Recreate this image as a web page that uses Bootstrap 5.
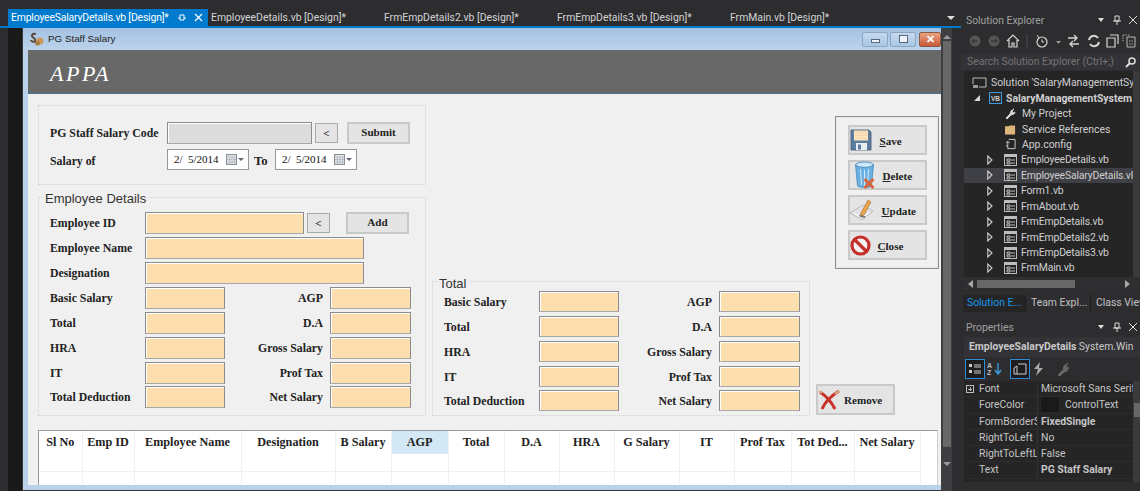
<!DOCTYPE html>
<html lang="en">
<head>
<meta charset="UTF-8">
<title>PG Staff Salary</title>
<link href="https://cdn.jsdelivr.net/npm/bootstrap@5.3.0/dist/css/bootstrap.min.css" rel="stylesheet">
<style>
html, body { height: 491px; overflow: hidden; }
body { background: #2d2d30; font-family: Roboto, sans-serif; color: #d0d0d0; }
.shell { width: 1140px; height: 491px; }
.editor { width: 961px; }
.tabbar { height: 28px; padding: 9px 0 0 8px; border-bottom: 2px solid #007acc; }
.vs-tab { width: 173px; height: 17px; padding-left: 3px; font-size: 10.4px; line-height: 17px; color: #d4d4d4; white-space: nowrap; }
.vs-tab.active { width: 200px; background: #007acc; color: #fff; letter-spacing: -.17px; }
.tab-x { margin: 0 5px 0 8px; }
.tab-more { margin-left: auto; margin-right: 6px; width: 0; height: 0; margin-top: 7px; border: 4px solid transparent; border-top-color: #ddd; }
.gutter { width: 23px; background: linear-gradient(90deg, #2d2d30 0 8px, #191919 8px 22px, #3a3a3c 22px); }
.window { width: 918px; background: #b9d1ea; border-bottom: 1px solid #333; padding: 0 0 5px 5px; }
.titlebar { height: 22px; margin-left: -5px; padding-left: 7px; background: linear-gradient(#a3c1e2, #bcd3ec); color: #222; font-family: "Liberation Sans", sans-serif; font-size: 9.8px; }
.cap { height: 15px; margin-left: 2px; border: 1px solid #8ba6c4; border-radius: 2px; background: linear-gradient(#c6daef, #a9c5e4); width: 26px; }
.cap.shut { width: 22px; background: linear-gradient(#e9a27f, #c9583a); border-color: #8d5a45; color: #fff; font-size: 11px; line-height: 12px; font-weight: 700; margin-left: 3px; }
.cap i { display: block; background: #eef3f9; border: 1px solid #56677c; }
.cap i.min { width: 9px; height: 4px; margin-top: 6px; }
.cap i.max { width: 9px; height: 8px; }
.brand { height: 44px; padding: 0 0 0 22px; background: #686868; border-bottom: 2px dotted #48718f; color: #fff; font-family: "Liberation Serif", serif; font-style: italic; font-size: 22px; letter-spacing: 2.5px; line-height: 47px; }
.form-body { height: 391px; padding: 11px 0 0 10px; background: #f0f0f0; overflow: hidden; color: #222; font-family: "Liberation Serif", serif; font-size: 11.8px; font-weight: 700; }
.left-col { width: 388px; }
.group { position: relative; border: 1px dotted #d2d2d2; }
.code-group { height: 80px; padding: 16px 15px 0 11px; }
.emp-group { height: 219px; margin-top: 12px; padding: 12.5px 0 0 11px; }
.total-group { width: 378px; height: 135px; padding: 7px 0 0 11px; }
.legend-text { position: absolute; top: -6px; left: 6px; padding-right: 2px; background: #f0f0f0; color: #333; font-family: "Liberation Sans", sans-serif; font-weight: 400; font-size: 13px; line-height: 13px; }
.total-group .legend-text { top: -5px; }
.code-label { width: 117px; }
.line .code-label { padding-top: 2px; }
.line { height: 22px; margin-bottom: 4px; }
.fields { display: grid; grid-template-columns: 95px 80px 105px 81px; grid-auto-rows: 25px; align-items: center; }
.total-group .fields { grid-template-columns: 95px 80px 100px 81px; }
.fields > span { padding-top: 2px; }
.fields .end { text-align: right; padding-right: 7px; }
.fields > :nth-last-child(-n+4) { margin-top: -2px; }
.span-all { grid-column: 2 / -1; }
.form-control.peach, .form-control.grey { height: 21.5px; min-height: 0; padding: 0; border: 1px solid #8c8c8c; border-bottom-color: #a8a8a8; border-radius: 0; background: #fddeae; box-shadow: inset 1px 1px 0 #fff; }
.form-control.grey { background: #dcdcdc; width: 145px; }
.w-id { width: 159px !important; }
.w-name { width: 219px !important; }
.btn.win { padding: 0; border: 2px solid #c9c9c9; border-radius: 0; background: #e4e4e4; color: #222; font: inherit; font-size: 11.1px; }
.btn.lt { width: 23px; height: 20px; margin-left: 3px; line-height: 14px; border-width: 1px; border-color: #aaa; }
.btn.push { width: 63px; height: 22px; line-height: 14px; padding-bottom: 3px; margin-left: 9px; }
.btn.add-btn { margin-left: 16px; }
.date { width: 82px; height: 21px; padding-left: 6px; background: #fff; border: 1px solid #999; font-weight: 400; font-size: 11px; color: #111; white-space: pre; }
.date b { width: 0; height: 0; margin: 3px 4px 0 1px; border: 3.5px solid transparent; border-top-color: #667; }
.to-label { width: 26px; padding-left: 5px; font-size: 12.8px; }
.right-col { width: 507px; margin-left: 6px; }
.actions { width: 104px; height: 153px; margin-top: 11px; padding-top: 8px; border: 1px solid #8f8f8f; box-shadow: inset 0 0 0 1px #e6e6e6; }
.btn.act { width: 79px; height: 30px; }
.btn.act + .btn.act { margin-top: 5px; }
.btn.act u { text-decoration-thickness: 1px; }
.btn.act span, .btn.rm span { padding-top: 2px; }
.close-txt { margin-left: 3px; }
.btn.rm { width: 79px; height: 31px; margin: 0 0 1px 6px; }
.sheet { width: 900px; margin-top: 14px; background: #fff; border: 1px solid #9a9a9a; border-right-color: #ccc; }
.sheet .table { width: 881px; margin: 0; table-layout: fixed; font-size: 12.2px; --bs-table-bg: transparent; }
.sheet th, .sheet td { padding: 0; height: 17.5px; text-align: center; border: 0; border-right: 1px solid #f0f0f0; border-bottom: 1px solid #f0f0f0; color: #222; white-space: nowrap; }
.sheet th { height: 21px; border-bottom: 0; line-height: 23px; }
.sheet th.on { background: #d3e7f4; }
.vscroll { width: 19px; padding-right: 8px; background: linear-gradient(90deg, #3e3e42 0 11px, #2d2d30 11px); }
.vscroll .thumb { width: 8px; height: 406px; margin: 2px 0 0 2px; background: #686868; }
.arr-up, .arr-dn { width: 0; height: 0; margin-left: 2px; border: 4px solid transparent; }
.arr-up { margin-top: 3px; border-bottom-color: #999; }
.arr-dn { margin-top: 15px; border-top-color: #999; }
.side { width: 179px; padding-top: 12px; font-size: 10.4px; overflow: hidden; }
.pane-title { height: 16px; padding: 0 3px 0 5px; color: #a0a0a0; line-height: 15px; white-space: nowrap; }
.pane-title svg { flex: none; }
.tools { height: 25px; padding-left: 5px; }
.search { height: 16px; margin-top: 1px; padding-left: 6px; background: #333337; color: #747474; line-height: 15px; white-space: nowrap; }
.tree { height: 206px; margin: 1px 0 0 3px; padding: 4px 0 0; background: #252526; color: #cfcfcf; overflow: hidden; position: relative; }
.tree li { height: 15.45px; line-height: 15px; white-space: nowrap; overflow: hidden; width: 169px; }
.tree li.sel { background: #3f3f46; }
.tree svg { flex: none; }
.lv0 { padding-left: 8px; }
.lv1 { padding-left: 10px; }
.lv2 { padding-left: 41px; }
.lv2 svg { margin-right: 6px; }
.lv3 { padding-left: 23px; letter-spacing: -.15px; }
.tw { margin-right: 9px; }
.lv3 .tw { margin-right: 11px; }
.tree-bar { position: absolute; right: 0; top: 0; bottom: 0; width: 7px; background: #3a3a3d; }
.hbar { height: 13px; margin-left: 3px; padding: 0 10px 0 4px; background: #2f2f32; }
.hbar span { width: 98px; height: 8px; margin-left: 4px; background: #686868; }
.side-tabs { height: 17px; margin: 5px 0 0 2px; line-height: 16px; white-space: nowrap; color: #c2c2c2; }
.side-tabs span { flex: none; width: 65px; padding-left: 5px; border-right: 1px solid #1c1c1c; }
.side-tabs .on { background: #252526; color: #1c97ea; width: 63px; padding-left: 4px; }
.props-title { margin-top: 7px; }
.selector { height: 20px; margin: 2px 0 0 3px; padding-left: 5px; background: #333337; line-height: 19px; color: #c8c8c8; white-space: nowrap; overflow: hidden; }
.prop-tools { height: 24px; padding-left: 4px; }
.ptool { width: 18px; height: 20px; margin-right: 1px; }
.ptool.on { width: 20px; outline: 1px solid #2a8dd4; background: #1d1d1f; outline-offset: -1px; }
.ptool:nth-child(2) { margin-right: 6px; }
.ptool:nth-child(3) { margin-right: 0; }
.ptool:nth-child(4) { width: 16px; margin-right: 8px; }
.props { height: 101px; margin-left: 3px; background: #252526; overflow: hidden; position: relative; }
.props .rowp { height: 16.3px; line-height: 16px; white-space: nowrap; border-bottom: 1px solid #2d2d30; }
.pn { width: 74px; padding-left: 15px; flex: none; overflow: hidden; border-right: 1px solid #333; color: #c4c4c4; }
.pv { padding-left: 3px; color: #c4c4c4; }
.expand { position: absolute; left: 2px; top: 4px; width: 8px; height: 8px; border: 1px solid #bbb; }
.expand::before { content: ""; position: absolute; left: 1px; top: 2.5px; width: 4px; height: 1px; background: #bbb; }
.expand::after { content: ""; position: absolute; left: 2.5px; top: 1px; width: 1px; height: 4px; background: #bbb; }
.swatch { width: 18px; height: 15px; margin-right: 6px; background: #1a1a1a; }
.prop-bar { position: absolute; right: 0; top: 0; bottom: 0; width: 7px; background: #3a3a3d; }
.prop-bar::after { content: ""; position: absolute; left: 1px; top: 22px; width: 6px; height: 14px; background: #686868; }
</style>
</head>
<body>
<svg width="0" height="0" class="position-absolute">
  <symbol id="ico-form" viewBox="0 0 13 12"><rect x=".5" y=".5" width="12" height="11" fill="#252526" stroke="#bdbdbd"/><rect x="1" y="1" width="11" height="2" fill="#bdbdbd"/><path d="M3 5h3v2H3zM3 8h3v2H3z" fill="none" stroke="#bdbdbd"/><path d="M7 6h4M7 9h4" stroke="#bdbdbd"/></symbol>
  <symbol id="ico-tw" viewBox="0 0 6 10"><path d="M.8 1v8L5 5z" fill="none" stroke="#d0d0d0" stroke-width="1.100"/></symbol>
</svg>
<div class="shell d-flex">
  <div class="editor d-flex flex-column flex-shrink-0">
    <div class="tabbar d-flex">
      <div class="vs-tab active d-flex align-items-center"><span>EmployeeSalaryDetails.vb [Design]*</span>
        <svg class="ms-auto" width="8" height="8" viewBox="0 0 8 8"><path d="M2 1v5h4V1zM0 4h2M6 4h2" fill="none" stroke="#fff"/></svg>
        <svg class="tab-x" width="9" height="9" viewBox="0 0 9 9"><path d="M1 1l7 7M8 1L1 8" stroke="#fff" stroke-width="1.2"/></svg>
      </div>
      <div class="vs-tab">EmployeeDetails.vb [Design]*</div>
      <div class="vs-tab">FrmEmpDetails2.vb [Design]*</div>
      <div class="vs-tab">FrmEmpDetails3.vb [Design]*</div>
      <div class="vs-tab">FrmMain.vb [Design]*</div>
      <div class="tab-more"></div>
    </div>
    <div class="d-flex flex-grow-1">
      <div class="gutter"></div>
      <div class="window d-flex flex-column">
        <div class="titlebar d-flex align-items-center">
          <svg class="me-1" width="14" height="14" viewBox="0 0 14 14"><path d="M6 2C2 1 1 4 3 5.500S6 7 5 9 1 9 1 8" fill="none" stroke="#5a4636" stroke-width="1.800"/><circle cx="10" cy="9" r="3.500" fill="#c99a5b"/><circle cx="7.500" cy="11" r="2.500" fill="#a87b42"/></svg>
          <span>PG Staff Salary</span>
          <div class="cap ms-auto d-flex justify-content-center"><i class="min"></i></div>
          <div class="cap d-flex justify-content-center align-items-center"><i class="max"></i></div>
          <div class="cap shut text-center">&#10005;</div>
        </div>
        <div class="brand">APPA</div>
        <div class="form-body">
          <div class="d-flex">
            <div class="left-col flex-shrink-0">
              <div class="group code-group">
                <div class="d-flex align-items-center line">
                  <span class="code-label">PG Staff Salary Code</span>
                  <input class="form-control grey" type="text" disabled>
                  <button class="btn win lt" type="button">&lt;</button>
                  <button class="btn win push" type="button">Submit</button>
                </div>
                <div class="d-flex align-items-center">
                  <span class="code-label pt-1">Salary of</span>
                  <div class="date d-flex align-items-center"><span>2/  5/2014</span>
                    <svg class="ms-auto" width="11" height="11" viewBox="0 0 11 11"><rect x=".5" y=".5" width="10" height="10" fill="#dfe3e8" stroke="#8a8f96"/><path d="M1 3h9M3.500 3v7M6 3v7M8.500 3v7M1 5.500h9M1 8h9" stroke="#a9aeb5" stroke-width=".6"/></svg>
                    <b></b>
                  </div>
                  <span class="to-label pt-1">To</span>
                  <div class="date d-flex align-items-center"><span>2/  5/2014</span>
                    <svg class="ms-auto" width="11" height="11" viewBox="0 0 11 11"><rect x=".5" y=".5" width="10" height="10" fill="#dfe3e8" stroke="#8a8f96"/><path d="M1 3h9M3.500 3v7M6 3v7M8.500 3v7M1 5.500h9M1 8h9" stroke="#a9aeb5" stroke-width=".6"/></svg>
                    <b></b>
                  </div>
                </div>
              </div>
              <div class="group emp-group">
                <span class="legend-text">Employee Details</span>
                <div class="fields">
                  <span>Employee ID</span>
                  <div class="span-all d-flex align-items-center">
                    <input class="form-control peach w-id" type="text">
                    <button class="btn win lt" type="button">&lt;</button>
                    <button class="btn win push add-btn" type="button">Add</button>
                  </div>
                  <span>Employee Name</span><div class="span-all"><input class="form-control peach w-name" type="text"></div>
                  <span>Designation</span><div class="span-all"><input class="form-control peach w-name" type="text"></div>
                  <span>Basic Salary</span><input class="form-control peach" type="text"><span class="end">AGP</span><input class="form-control peach" type="text">
                  <span>Total</span><input class="form-control peach" type="text"><span class="end">D.A</span><input class="form-control peach" type="text">
                  <span>HRA</span><input class="form-control peach" type="text"><span class="end">Gross Salary</span><input class="form-control peach" type="text">
                  <span>IT</span><input class="form-control peach" type="text"><span class="end">Prof Tax</span><input class="form-control peach" type="text">
                  <span>Total Deduction</span><input class="form-control peach" type="text"><span class="end">Net Salary</span><input class="form-control peach" type="text">
                </div>
              </div>
            </div>
            <div class="right-col d-flex flex-column">
              <div class="actions align-self-end d-flex flex-column align-items-center">
                <button class="btn win act d-flex align-items-center" type="button">
                  <svg class="me-2" width="22" height="22" viewBox="0 0 22 22"><path d="M1 1h18l2 2v18H1z" fill="#5d7d9e" stroke="#3f5670" stroke-width=".8"/><rect x="4" y="1.500" width="14" height="10" fill="#fde3bb"/><path d="M5 4h12M5 6.500h12M5 9h12" stroke="#e9cfa4" stroke-width=".6"/><rect x="6" y="14" width="11" height="7" fill="#e8eef4"/><rect x="8" y="15.500" width="3" height="5" fill="#5d7d9e"/></svg><span><u>S</u>ave</span>
                </button>
                <button class="btn win act d-flex align-items-center" type="button">
                  <svg class="ms-1 me-2" width="21" height="28" viewBox="0 0 20 28"><ellipse cx="10" cy="4" rx="9" ry="3" fill="#cfe8f8" stroke="#4f93c7"/><path d="M1 4l2 21c2 2 12 2 14 0l2-21c-3 3-15 3-18 0z" fill="#6bb0e0" stroke="#3f85ba" stroke-width=".7"/><path d="M6 8l1 16M10 9v16M14 8l-1 16" stroke="#cfe8f8" stroke-width="1"/><path d="M10 18l9 9M19 18l-9 9" stroke="#d8663c" stroke-width="3"/></svg><span><u>D</u>elete</span>
                </button>
                <button class="btn win act d-flex align-items-center" type="button">
                  <svg class="me-2" width="24" height="24" viewBox="0 0 24 24"><path d="M0 15L13 7l10 6-11 9z" fill="#e2e2e2" stroke="#aaa" stroke-width=".7"/><path d="M4 15l8 5 8-6" fill="none" stroke="#fff"/><path d="M11 15L18 2l3 2-7 13-3.500 1z" fill="#e9a54c" stroke="#a8682a" stroke-width=".6"/><path d="M9 17l6 1v2l-5-1z" fill="#777"/></svg><span><u>U</u>pdate</span>
                </button>
                <button class="btn win act d-flex align-items-center" type="button">
                  <svg class="me-1" width="21" height="21" viewBox="0 0 21 21"><circle cx="10.500" cy="10.500" r="8.500" fill="#f3f3f3" stroke="#c5302b" stroke-width="3.200"/><path d="M4.500 4.500l12 12" stroke="#c5302b" stroke-width="3.200"/></svg><span class="close-txt"><u>C</u>lose</span>
                </button>
              </div>
              <div class="d-flex align-items-end mt-auto">
                <div class="group total-group">
                  <span class="legend-text">Total</span>
                  <div class="fields">
                    <span>Basic Salary</span><input class="form-control peach" type="text"><span class="end">AGP</span><input class="form-control peach" type="text">
                    <span>Total</span><input class="form-control peach" type="text"><span class="end">D.A</span><input class="form-control peach" type="text">
                    <span>HRA</span><input class="form-control peach" type="text"><span class="end">Gross Salary</span><input class="form-control peach" type="text">
                    <span>IT</span><input class="form-control peach" type="text"><span class="end">Prof Tax</span><input class="form-control peach" type="text">
                    <span>Total Deduction</span><input class="form-control peach" type="text"><span class="end">Net Salary</span><input class="form-control peach" type="text">
                  </div>
                </div>
                <button class="btn win rm d-flex align-items-center" type="button">
                  <svg class="me-1" width="22" height="22" viewBox="0 0 22 22"><path d="M2 3c6 4 11 9 15 17" fill="none" stroke="#c8342a" stroke-width="3"/><path d="M4 20C7 13 13 7 21 2" fill="none" stroke="#c8342a" stroke-width="3"/><path d="M17 5l4-3M1 2l3 2" stroke="#d7b48a" stroke-width="2"/></svg><span>Remove</span>
                </button>
              </div>
            </div>
          </div>
          <div class="sheet">
            <table class="table">
              <colgroup><col width="43"><col width="52"><col width="107"><col width="94"><col width="56"><col width="57"><col width="56"><col width="55"><col width="55"><col width="65"><col width="55"><col width="57"><col width="63"><col width="66"></colgroup>
              <thead><tr><th>Sl No</th><th>Emp ID</th><th>Employee Name</th><th>Designation</th><th>B Salary</th><th class="on">AGP</th><th>Total</th><th>D.A</th><th>HRA</th><th>G Salary</th><th>IT</th><th>Prof Tax</th><th>Tot Ded...</th><th>Net Salary</th></tr></thead>
              <tbody>
                <tr><td></td><td></td><td></td><td></td><td></td><td></td><td></td><td></td><td></td><td></td><td></td><td></td><td></td><td></td></tr>
                <tr><td></td><td></td><td></td><td></td><td></td><td></td><td></td><td></td><td></td><td></td><td></td><td></td><td></td><td></td></tr>
              </tbody>
            </table>
          </div>
        </div>
      </div>
      <div class="vscroll d-flex flex-column">
        <div class="arr-up"></div>
        <div class="thumb"></div>
        <div class="arr-dn"></div>
      </div>
    </div>
  </div>

  <div class="side flex-shrink-0 d-flex flex-column">
    <div class="pane-title d-flex align-items-center">
      <span>Solution Explorer</span>
      <svg class="ms-auto" width="8" height="8" viewBox="0 0 8 8"><path d="M1 2h6L4 6z" fill="#ddd"/></svg>
      <svg class="ms-2" width="8" height="10" viewBox="0 0 8 10"><path d="M2 1h4v5H2zM0 6h8M4 6v4" fill="none" stroke="#ddd"/></svg>
      <svg class="ms-2" width="8" height="8" viewBox="0 0 8 8"><path d="M0 0l8 8M8 0L0 8" stroke="#ddd"/></svg>
    </div>
    <div class="tools d-flex align-items-center">
      <svg width="170" height="18" viewBox="0 0 170 18">
        <circle cx="9" cy="9" r="5.500" fill="#555"/><path d="M12 9H6M8 7L6 9l2 2" fill="none" stroke="#2d2d30"/>
        <circle cx="28" cy="9" r="5.500" fill="#555"/><path d="M25 9h6M29 7l2 2-2 2" fill="none" stroke="#2d2d30"/>
        <path d="M41 9l6-6 6 6M43 8v7h3v-4h2v4h3V8" fill="none" stroke="#d6d6d6" stroke-width="1.200"/>
        <path d="M61 2v14" stroke="#4a4a4d"/>
        <circle cx="76" cy="10" r="5" fill="none" stroke="#d6d6d6" stroke-width="1.200"/><path d="M76 7.500V10h2M71 3l2 3" fill="none" stroke="#d6d6d6"/>
        <path d="M90 9h5l-2.500 3z" fill="#999"/>
        <path d="M102 6h9M108 3l3 3-3 3M113 12h-9M107 9l-3 3 3 3" fill="none" stroke="#d6d6d6" stroke-width="1.300"/>
        <path d="M123 8a5 5 0 0 1 9-2M133 10a5 5 0 0 1-9 2" fill="none" stroke="#d6d6d6" stroke-width="2"/>
        <path d="M141 6h8v9h-8zM144 3h8v9" fill="none" stroke="#d6d6d6" stroke-width="1.200"/>
        <path d="M161 5h8v10h-8z" fill="none" stroke="#bbb"/><path d="M157 3h7M157 3v7M163 9h4M163 12h4" stroke="#aaa" stroke-dasharray="1.500 1"/>
      </svg>
    </div>
    <div class="search d-flex">
      <span>Search Solution Explorer (Ctrl+;)</span>
      <svg class="ms-auto me-1 align-self-center" width="11" height="11" viewBox="0 0 11 11"><circle cx="7" cy="4" r="3" fill="none" stroke="#ddd" stroke-width="1.500"/><path d="M5 6l-4 4" stroke="#ddd" stroke-width="2"/></svg>
    </div>
    <div class="tree">
      <ul class="list-unstyled m-0">
        <li class="lv0 d-flex align-items-center"><svg class="me-1" width="15" height="12" viewBox="0 0 15 12"><path d="M1 1h13v9H7M1 1v6" fill="none" stroke="#bbb"/><path d="M1 8h5v3H1z" fill="#999"/></svg>Solution 'SalaryManagementSy</li>
        <li class="lv1 d-flex align-items-center fw-bold"><svg class="tw" width="6" height="6" viewBox="0 0 6 6"><path d="M6 0v6H0z" fill="#d8d8d8"/></svg><svg class="me-1" width="13" height="12" viewBox="0 0 13 12"><rect x=".5" y=".5" width="12" height="11" fill="#2a2a2c" stroke="#3c9bdc"/><text x="6.500" y="8.500" fill="#ccc" font-size="6.500" text-anchor="middle" font-family="Liberation Sans" font-weight="700">VB</text></svg>SalaryManagementSystem</li>
        <li class="lv2 d-flex align-items-center"><svg width="11" height="11" viewBox="0 0 11 11"><path d="M1 10l4-4 1-3 3-2-2 2 1 2 2-1-1 2-3 1-4 4z" fill="#d4d4d4" stroke="#d4d4d4"/></svg>My Project</li>
        <li class="lv2 d-flex align-items-center"><svg width="11" height="11" viewBox="0 0 12 11"><path d="M0 2h4l1-1h6v10H0z" fill="#dcb67a"/></svg>Service References</li>
        <li class="lv2 d-flex align-items-center"><svg width="11" height="12" viewBox="0 0 12 12"><path d="M4 1h7v10H3V8M1 5l2-2 2 2M3 3v5H1" fill="none" stroke="#d4d4d4"/></svg>App.config</li>
        <li class="lv3 d-flex align-items-center"><svg class="tw" width="6" height="10"><use href="#ico-tw"/></svg><svg class="me-1" width="13" height="12"><use href="#ico-form"/></svg>EmployeeDetails.vb</li>
        <li class="lv3 d-flex align-items-center sel"><svg class="tw" width="6" height="10"><use href="#ico-tw"/></svg><svg class="me-1" width="13" height="12"><use href="#ico-form"/></svg>EmployeeSalaryDetails.vl</li>
        <li class="lv3 d-flex align-items-center"><svg class="tw" width="6" height="10"><use href="#ico-tw"/></svg><svg class="me-1" width="13" height="12"><use href="#ico-form"/></svg>Form1.vb</li>
        <li class="lv3 d-flex align-items-center"><svg class="tw" width="6" height="10"><use href="#ico-tw"/></svg><svg class="me-1" width="13" height="12"><use href="#ico-form"/></svg>FrmAbout.vb</li>
        <li class="lv3 d-flex align-items-center"><svg class="tw" width="6" height="10"><use href="#ico-tw"/></svg><svg class="me-1" width="13" height="12"><use href="#ico-form"/></svg>FrmEmpDetails.vb</li>
        <li class="lv3 d-flex align-items-center"><svg class="tw" width="6" height="10"><use href="#ico-tw"/></svg><svg class="me-1" width="13" height="12"><use href="#ico-form"/></svg>FrmEmpDetails2.vb</li>
        <li class="lv3 d-flex align-items-center"><svg class="tw" width="6" height="10"><use href="#ico-tw"/></svg><svg class="me-1" width="13" height="12"><use href="#ico-form"/></svg>FrmEmpDetails3.vb</li>
        <li class="lv3 d-flex align-items-center"><svg class="tw" width="6" height="10"><use href="#ico-tw"/></svg><svg class="me-1" width="13" height="12"><use href="#ico-form"/></svg>FrmMain.vb</li>
        <li class="lv3 d-flex align-items-center"><svg class="tw" width="6" height="10"><use href="#ico-tw"/></svg><svg class="me-1" width="13" height="12"><use href="#ico-form"/></svg></li>
      </ul>
      <div class="tree-bar"></div>
    </div>
    <div class="hbar d-flex align-items-center">
      <svg width="5" height="8" viewBox="0 0 5 8"><path d="M5 0v8L0 4z" fill="#aaa"/></svg>
      <span></span>
      <svg class="ms-auto" width="5" height="8" viewBox="0 0 5 8"><path d="M0 0v8l5-4z" fill="#aaa"/></svg>
    </div>
    <div class="side-tabs d-flex"><span class="on">Solution E...</span><span>Team Expl...</span><span>Class View</span></div>
    <div class="pane-title props-title d-flex align-items-center">
      <span>Properties</span>
      <svg class="ms-auto" width="8" height="8" viewBox="0 0 8 8"><path d="M1 2h6L4 6z" fill="#ddd"/></svg>
      <svg class="ms-2" width="8" height="10" viewBox="0 0 8 10"><path d="M2 1h4v5H2zM0 6h8M4 6v4" fill="none" stroke="#ddd"/></svg>
      <svg class="ms-2" width="8" height="8" viewBox="0 0 8 8"><path d="M0 0l8 8M8 0L0 8" stroke="#ddd"/></svg>
    </div>
    <div class="selector"><b>EmployeeSalaryDetails</b> System.Win</div>
    <div class="prop-tools d-flex align-items-center">
      <div class="ptool on d-flex align-items-center justify-content-center"><svg width="14" height="12" viewBox="0 0 14 12"><path d="M1 1h3v3H1zM1 7h3v3H1z" fill="#ccc"/><path d="M6 2h7M6 4h7M6 8h7M6 10h7" stroke="#ccc"/></svg></div>
      <div class="ptool d-flex align-items-center justify-content-center"><svg width="16" height="14" viewBox="0 0 16 14"><text x="0" y="6" fill="#bbb" font-size="7" font-family="Liberation Sans" font-weight="700">A</text><text x="0" y="13" fill="#bbb" font-size="7" font-family="Liberation Sans" font-weight="700">Z</text><path d="M11 1v10M8 8l3 4 3-4" fill="none" stroke="#3c9bdc" stroke-width="1.400"/></svg></div>
      <div class="ptool on d-flex align-items-center justify-content-center"><svg width="14" height="14" viewBox="0 0 14 14"><path d="M5 2h8v10H4M1 6l3-2v8H1z" fill="none" stroke="#ccc"/></svg></div>
      <div class="ptool d-flex align-items-center justify-content-center"><svg width="12" height="14" viewBox="0 0 12 14"><path d="M8 0L2 7h4l-2 7 7-8H7z" fill="#aaa"/></svg></div>
      <div class="ptool d-flex align-items-center justify-content-center"><svg width="12" height="14" viewBox="0 0 12 14"><path d="M1 13l5-5 1-4 4-3-2 3 1 2 2-1-2 4-3 1-4 4z" fill="#666" stroke="#666"/></svg></div>
    </div>
    <div class="props">
      <span class="expand"></span>
      <div class="rowp d-flex"><span class="pn">Font</span><span class="pv">Microsoft Sans Serif,</span></div>
      <div class="rowp d-flex"><span class="pn">ForeColor</span><span class="pv d-flex"><span class="swatch"></span>ControlText</span></div>
      <div class="rowp d-flex"><span class="pn">FormBorderS</span><span class="pv fw-bold">FixedSingle</span></div>
      <div class="rowp d-flex"><span class="pn">RightToLeft</span><span class="pv">No</span></div>
      <div class="rowp d-flex"><span class="pn">RightToLeftL</span><span class="pv">False</span></div>
      <div class="rowp d-flex"><span class="pn">Text</span><span class="pv fw-bold">PG Staff Salary</span></div>
      <div class="prop-bar"></div>
    </div>
  </div>
</div>
</body>
</html>
